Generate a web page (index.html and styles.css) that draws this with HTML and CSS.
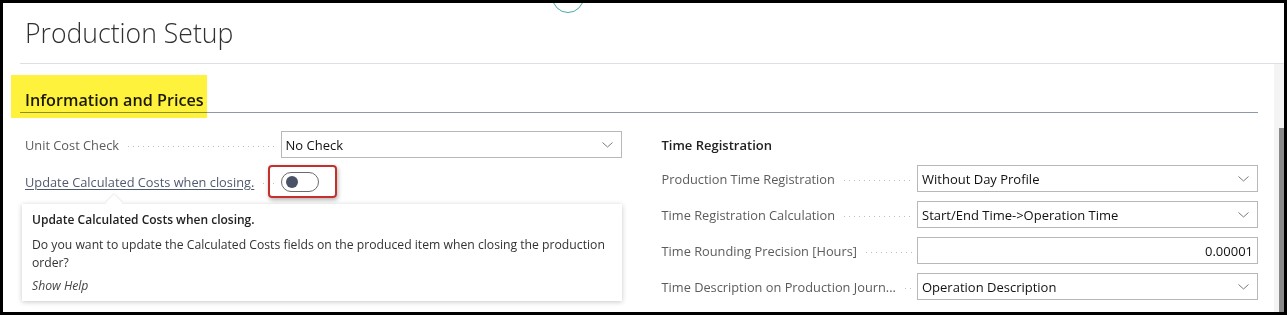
FILE: index.html
```html
<!DOCTYPE html>
<html lang="en">

<head>
    <meta charset="UTF-8">
    <meta name="viewport" content="width=device-width, initial-scale=1.0">
    <title>Production Setup</title>
    <link rel="stylesheet" href="styles.css">
</head>

<body>
    <div class="frame">
        <div class="top-notch"></div>

        <div class="page-header">
            <h1 class="page-title">Production Setup</h1>
        </div>

        <div class="body-row">
            <div class="content">
                <div class="section-head">
                    <div class="highlight"></div>
                    <h2 class="section-title">Information and Prices</h2>
                </div>

                <div class="columns">
                    <!-- left group -->
                    <div class="col">
                        <div class="field">
                            <span class="label">Unit Cost Check</span>
                            <span class="leader"></span>
                            <div class="input select">
                                <span class="value">No Check</span>
                                <svg class="chevron" width="11" height="6" viewBox="0 0 11 6"><path d="M0.5 0.5 L5.5 5 L10.5 0.5" fill="none" stroke="#7a7a7a" stroke-width="1"/></svg>
                            </div>
                        </div>

                        <div class="field toggle-field">
                            <a class="label link">Update Calculated Costs when closing.</a>
                            <span class="leader"></span>
                            <div class="toggle-cell">
                                <div class="toggle"><span class="knob"></span></div>
                                <div class="annotation"></div>
                            </div>

                            <div class="tooltip">
                                <div class="tooltip-title">Update Calculated Costs when closing.</div>
                                <p class="tooltip-text">Do you want to update the Calculated Costs fields on the produced item when closing the production order?</p>
                                <a class="tooltip-help">Show Help</a>
                            </div>
                        </div>
                    </div>

                    <!-- right group -->
                    <div class="col">
                        <div class="group-title">Time Registration</div>

                        <div class="field">
                            <span class="label">Production Time Registration</span>
                            <span class="leader"></span>
                            <div class="input select">
                                <span class="value">Without Day Profile</span>
                                <svg class="chevron" width="11" height="6" viewBox="0 0 11 6"><path d="M0.5 0.5 L5.5 5 L10.5 0.5" fill="none" stroke="#7a7a7a" stroke-width="1"/></svg>
                            </div>
                        </div>

                        <div class="field">
                            <span class="label">Time Registration Calculation</span>
                            <span class="leader"></span>
                            <div class="input select">
                                <span class="value">Start/End Time-&gt;Operation Time</span>
                                <svg class="chevron" width="11" height="6" viewBox="0 0 11 6"><path d="M0.5 0.5 L5.5 5 L10.5 0.5" fill="none" stroke="#7a7a7a" stroke-width="1"/></svg>
                            </div>
                        </div>

                        <div class="field">
                            <span class="label">Time Rounding Precision [Hours]</span>
                            <span class="leader"></span>
                            <div class="input number">
                                <span class="value">0.00001</span>
                            </div>
                        </div>

                        <div class="field">
                            <span class="label">Time Description on Production Journ...</span>
                            <span class="leader"></span>
                            <div class="input select">
                                <span class="value">Operation Description</span>
                                <svg class="chevron" width="11" height="6" viewBox="0 0 11 6"><path d="M0.5 0.5 L5.5 5 L10.5 0.5" fill="none" stroke="#7a7a7a" stroke-width="1"/></svg>
                            </div>
                        </div>
                    </div>
                </div>
            </div>

            <div class="scroll-track">
                <div class="scroll-thumb"></div>
            </div>
        </div>
    </div>
</body>

</html>
```

FILE: styles.css
```css
:root {
    --color-frame: #000000;
    --color-label: #5c5c5c;
    --color-text: #212121;
    --color-border: #b8b8b8;
    --color-rule: #dde1e6;
    --color-section: #8d98a8;
    --color-marker: #fff23c;
    --color-red: #c4302b;
}

* {
    margin: 0;
    padding: 0;
    box-sizing: border-box;
    font-family: 'Open Sans', 'Noto Sans', sans-serif;
}

body {
    background: #ffffff;
    color: var(--color-text);
}

.frame {
    position: relative;
    width: 1287px;
    height: 315px;
    border: 3px solid var(--color-frame);
    overflow: hidden;
    display: flex;
    flex-direction: column;
}

.top-notch {
    position: absolute;
    left: 549px;
    top: -22px;
    width: 32px;
    height: 32px;
    border: 1.5px solid #4aa9ae;
    border-radius: 50%;
    background: #ffffff;
}

.page-header {
    height: 61px;
    margin-left: 17px;
    padding-left: 5px;
    padding-top: 12px;
    border-bottom: 1px solid var(--color-rule);
}

.page-title {
    font-weight: 300;
    font-size: 26.6px;
    line-height: 36px;
    color: #303030;
}

.body-row {
    flex: 1;
    display: flex;
    min-height: 0;
}

.content {
    flex: 1;
    padding: 0 16px 0 17px;
}

/* section header with marker */
.section-head {
    position: relative;
    padding-top: 25px;
    padding-bottom: 1px;
    border-bottom: 1px solid var(--color-section);
}

.highlight {
    position: absolute;
    left: -9px;
    top: 11px;
    width: 196px;
    height: 43px;
    background: var(--color-marker);
    mix-blend-mode: multiply;
    z-index: 2;
}

.section-title {
    position: relative;
    padding-left: 5px;
    font-size: 16.2px;
    font-weight: 600;
    line-height: 22px;
    color: #1a1a1a;
}

.columns {
    display: grid;
    grid-template-columns: 1fr 1fr;
    column-gap: 40px;
    padding-left: 5px;
    padding-top: 18px;
}

.col {
    display: flex;
    flex-direction: column;
    gap: 9px;
}

.group-title {
    height: 25px;
    padding-top: 4px;
    line-height: 21px;
    font-size: 13px;
    font-weight: 600;
    color: #222;
}

/* fields */
.field {
    position: relative;
    display: flex;
    align-items: center;
    height: 27px;
}

.label {
    font-size: 12.8px;
    color: var(--color-label);
    white-space: nowrap;
}

.link {
    color: #505a6e;
    text-decoration: underline;
    text-underline-offset: 2px;
    text-decoration-thickness: 1px;
}

.leader {
    flex: 1;
    align-self: center;
    height: 1px;
    margin: 3px 5px 0 9px;
    background-image: linear-gradient(to right, #bdbdbd 1px, transparent 1px);
    background-size: 5px 1px;
    background-repeat: repeat-x;
}

.input {
    flex: 0 0 341px;
    height: 27px;
    border: 1px solid var(--color-border);
    display: flex;
    align-items: center;
    padding: 0 4px;
    font-size: 13px;
    color: #111;
}

.select {
    justify-content: space-between;
    padding-right: 8px;
}

.number {
    justify-content: flex-end;
}

.chevron {
    display: block;
}

/* toggle */
.toggle-field {
    margin-top: 1px;
}

.toggle-cell {
    position: relative;
    flex: 0 0 341px;
    height: 27px;
    display: flex;
    align-items: center;
}

.toggle {
    width: 38px;
    height: 20px;
    border: 1px solid #6b6b6b;
    border-radius: 10px;
    display: flex;
    align-items: center;
    padding-left: 4px;
}

.knob {
    width: 12px;
    height: 12px;
    border-radius: 50%;
    background: #4a5266;
}

.annotation {
    position: absolute;
    left: -13px;
    top: -3px;
    width: 69px;
    height: 33px;
    border: 2px solid var(--color-red);
    border-radius: 4px;
    box-shadow: 1px 2px 4px rgba(0, 0, 0, 0.3);
}

/* tooltip callout */
.tooltip {
    position: absolute;
    left: -3px;
    top: 36px;
    width: 600px;
    background: #ffffff;
    padding: 6px 10px 6px 10px;
    box-shadow: 0 1px 5px rgba(0, 0, 0, 0.22);
    z-index: 3;
}

.tooltip::before {
    content: "";
    position: absolute;
    left: 86px;
    top: -7px;
    width: 12px;
    height: 12px;
    background: #ffffff;
    transform: rotate(45deg);
    box-shadow: -1px -1px 2px rgba(0, 0, 0, 0.08);
}

.tooltip-title {
    position: relative;
    font-size: 12px;
    font-weight: 600;
    line-height: 20px;
    color: #222;
}

.tooltip-text {
    margin-top: 6px;
    font-size: 12.2px;
    line-height: 18px;
    color: #333;
}

.tooltip-help {
    display: block;
    margin-top: 5px;
    font-size: 12.2px;
    line-height: 18px;
    font-style: italic;
    color: #444;
}

/* scrollbar */
.scroll-track {
    width: 10px;
    background: #f4f4f4;
    display: flex;
    flex-direction: column;
    align-items: flex-end;
}

.scroll-thumb {
    margin-top: 64px;
    width: 5px;
    flex: 1;
    background: #8a8a8a;
}
```
